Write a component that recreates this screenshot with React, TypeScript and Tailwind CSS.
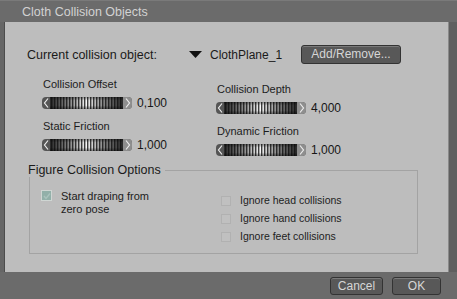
import { useId } from 'react';

function Slider() {
  const id = useId().replace(/:/g, '');
  return (
    <svg width="90" height="14" viewBox="0 0 90 14" className="shrink-0">
      <defs>
        <linearGradient id={`h${id}`} x1="0" x2="1" y1="0" y2="0">
          <stop offset="0" stopColor="#2a2a2a" />
          <stop offset="0.28" stopColor="#8c8c8c" />
          <stop offset="0.5" stopColor="#f8f8f8" />
          <stop offset="0.72" stopColor="#8c8c8c" />
          <stop offset="1" stopColor="#2a2a2a" />
        </linearGradient>
        <linearGradient id={`v${id}`} x1="0" x2="0" y1="0" y2="1">
          <stop offset="0" stopColor="#000" stopOpacity="0.4" />
          <stop offset="0.3" stopColor="#000" stopOpacity="0" />
          <stop offset="0.7" stopColor="#000" stopOpacity="0" />
          <stop offset="1" stopColor="#000" stopOpacity="0.45" />
        </linearGradient>
        <pattern id={`r${id}`} width="3" height="14" patternUnits="userSpaceOnUse">
          <rect x="0" y="0" width="1.4" height="14" fill="#111" opacity="0.8" />
        </pattern>
      </defs>
      <rect x="0" y="1" width="90" height="12" rx="4" fill="#555" />
      <rect x="78" y="1" width="12" height="12" rx="4" fill="#8e8e8e" />
      <rect x="8" y="1" width="73" height="12" fill={`url(#h${id})`} />
      <rect x="9" y="1" width="71" height="12" fill={`url(#r${id})`} />
      <rect x="8" y="1" width="73" height="12" fill={`url(#v${id})`} />
      <polyline points="6,2.5 2.5,7 6,11.5" fill="none" stroke="#ececec" strokeWidth="1.2" />
      <polyline points="84,2.5 87.5,7 84,11.5" fill="none" stroke="#ececec" strokeWidth="1.2" />
    </svg>
  );
}

function SliderField({ label, value }: { label: string; value: string }) {
  return (
    <div className="flex flex-col">
      <div className="text-[11px] leading-[13px] pl-[1px] text-[#1c1c1c]">{label}</div>
      <div className="mt-[5px] flex items-center h-[14px]">
        <Slider />
        <span className="ml-[5px] text-[12px] leading-[14px] text-[#161616]">{value}</span>
      </div>
    </div>
  );
}

function Box({ checked }: { checked?: boolean }) {
  if (checked) {
    return (
      <div className="w-[11px] h-[11px] shrink-0 border border-[#cfd6d3] bg-[#92b0a9] flex items-center justify-center">
        <svg width="8" height="8" viewBox="0 0 8 8">
          <polyline points="1,4 3,6.5 7,1.5" fill="none" stroke="#aac3bd" strokeWidth="1.4" />
        </svg>
      </div>
    );
  }
  return <div className="w-[10px] h-[10px] shrink-0 border border-[#b1b1b1] bg-[#c0c0c0]" />;
}

function DarkButton({ label, className }: { label: string; className: string }) {
  return (
    <div
      className={`${className} flex items-center justify-center rounded-[3px] border border-[#333] bg-[#585858] shadow-[inset_0_1px_0_#7a7a7a] text-[12px] text-[#d6d6d6]`}
    >
      {label}
    </div>
  );
}

export default function App() {
  return (
    <div className="w-[457px] h-[299px] bg-[#6b6b6b] flex flex-col font-['Liberation_Sans',Arial,sans-serif] overflow-hidden">
      {/* title bar */}
      <div className="h-[22px] shrink-0 pl-[22px] pt-[1px] flex items-center text-[12.5px] text-[#d2d2d2] border-t border-[#7a7a7a]">
        Cloth Collision Objects
      </div>

      {/* panel */}
      <div className="h-[250px] shrink-0 flex">
        <div className="w-[4px] bg-[#666]" />
        <div className="w-[444px] bg-[#bdbdbd] border-l border-[#4c4c4c] flex flex-col">
          {/* collision object row */}
          <div className="mt-[23px] h-[18px] flex items-center text-[12.5px] text-[#1a1a1a]">
            <span className="ml-[22px] w-[162px] pt-[2px]">Current collision object:</span>
            <svg width="13" height="7" viewBox="0 0 13 7">
              <polygon points="0,0 13,0 6.5,7" fill="#111" />
            </svg>
            <span className="ml-[8px] w-[91px] text-[12px] pt-[2px]">ClothPlane_1</span>
            <DarkButton label="Add/Remove..." className="w-[100px] h-[19px]" />
          </div>

          {/* sliders */}
          <div className="mt-[15px] flex">
            <div className="ml-[37px] w-[174px] flex flex-col gap-[10px]">
              <SliderField label="Collision Offset" value="0,100" />
              <SliderField label="Static Friction" value="1,000" />
            </div>
            <div className="mt-[5px] flex flex-col gap-[10px]">
              <SliderField label="Collision Depth" value="4,000" />
              <SliderField label="Dynamic Friction" value="1,000" />
            </div>
          </div>

          {/* group */}
          <div className="mt-[6px] ml-[23px] w-[390px] flex flex-col">
            <div className="h-[14px] flex items-center">
              <span className="text-[12.5px] leading-[14px] text-[#1a1a1a]">Figure Collision Options</span>
              <div className="ml-[4px] flex-1 h-[7px] self-end border-t border-r border-[#a3a3a3]" />
            </div>
            <div className="ml-[1px] h-[77px] border-l border-r border-b border-[#a3a3a3] flex items-start">
              <div className="pt-[13px] pl-[11px] w-[191px] flex items-start">
                <Box checked />
                <div className="ml-[9px] text-[11px] leading-[13px] text-[#1c1c1c]">
                  Start draping from
                  <br />
                  zero pose
                </div>
              </div>
              <div className="pt-[15px] flex flex-col">
                {['Ignore head collisions', 'Ignore hand collisions', 'Ignore feet collisions'].map((t) => (
                  <div key={t} className="h-[18px] flex items-center">
                    <Box />
                    <span className="ml-[9px] text-[10.5px] text-[#1e1e1e]">{t}</span>
                  </div>
                ))}
              </div>
            </div>
          </div>
        </div>
        <div className="flex-1 bg-[#5f5f5f] border-l border-[#8a8a8a]" />
      </div>

      {/* footer */}
      <div className="flex-1 flex justify-end items-start pt-[5px] pr-[16px] gap-[9px]">
        <DarkButton label="Cancel" className="w-[53px] h-[18px]" />
        <DarkButton label="OK" className="w-[49px] h-[18px]" />
      </div>
    </div>
  );
}
